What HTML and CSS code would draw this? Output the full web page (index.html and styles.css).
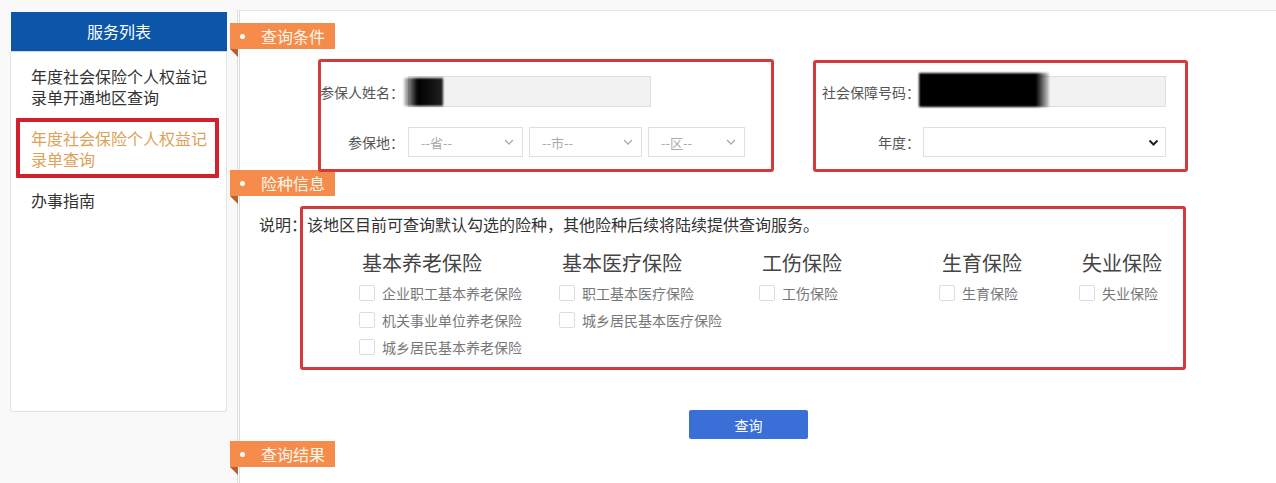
FILE: index.html
```html
<!DOCTYPE html>
<html>
<head>
    <title>年度社会保险个人权益记录单查询</title>
    <link rel="stylesheet" href="styles.css">
</head>
<body>
    <div class="page">
        <div class="sidebar">
            <div class="sidebar-head">服务列表</div>
            <ul class="menu">
                <li>年度社会保险个人权益记录单开通地区查询</li>
                <li class="active">年度社会保险个人权益记录单查询</li>
                <li>办事指南</li>
            </ul>
        </div>

        <div class="main">
            <div class="tag">查询条件</div>

            <div class="cond">
                <div class="cond-col">
                    <div class="field">
                        <label class="label">参保人姓名：</label>
                        <input class="input" type="text" readonly>
                    </div>
                    <div class="field">
                        <label class="label">参保地：</label>
                        <div class="select sel-prov">--省--<svg width="10" height="6" viewBox="0 0 10 6"><path d="M1 1l4 4 4-4" fill="none" stroke="#aaa" stroke-width="1.3"/></svg></div>
                        <div class="select sel-city">--市--<svg width="10" height="6" viewBox="0 0 10 6"><path d="M1 1l4 4 4-4" fill="none" stroke="#aaa" stroke-width="1.3"/></svg></div>
                        <div class="select sel-dist">--区--<svg width="10" height="6" viewBox="0 0 10 6"><path d="M1 1l4 4 4-4" fill="none" stroke="#aaa" stroke-width="1.3"/></svg></div>
                    </div>
                </div>
                <div class="cond-col">
                    <div class="field">
                        <label class="label label-wide">社会保障号码：</label>
                        <input class="input" type="text" readonly>
                    </div>
                    <div class="field">
                        <label class="label label-wide">年度：</label>
                        <div class="select sel-year"><svg width="11" height="7" viewBox="0 0 11 7"><path d="M1.5 1.5l4 4 4-4" fill="none" stroke="#222" stroke-width="2"/></svg></div>
                    </div>
                </div>
            </div>

            <div class="tag tag-mid">险种信息</div>

            <p class="note">说明：该地区目前可查询默认勾选的险种，其他险种后续将陆续提供查询服务。</p>

            <div class="groups">
                <div class="group">
                    <div class="group-title">基本养老保险</div>
                    <div class="check"><span class="box"></span>企业职工基本养老保险</div>
                    <div class="check"><span class="box"></span>机关事业单位养老保险</div>
                    <div class="check"><span class="box"></span>城乡居民基本养老保险</div>
                </div>
                <div class="group">
                    <div class="group-title">基本医疗保险</div>
                    <div class="check"><span class="box"></span>职工基本医疗保险</div>
                    <div class="check"><span class="box"></span>城乡居民基本医疗保险</div>
                </div>
                <div class="group">
                    <div class="group-title">工伤保险</div>
                    <div class="check"><span class="box"></span>工伤保险</div>
                </div>
                <div class="group">
                    <div class="group-title">生育保险</div>
                    <div class="check"><span class="box"></span>生育保险</div>
                </div>
                <div class="group">
                    <div class="group-title">失业保险</div>
                    <div class="check"><span class="box"></span>失业保险</div>
                </div>
            </div>

            <button class="button">查询</button>

            <div class="tag tag-last">查询结果</div>
        </div>

        <!-- redactions and annotation frames drawn over the screenshot -->
        <div class="blot blot-name"></div>
        <div class="blot blot-id"></div>
        <div class="mark mark-menu"></div>
        <div class="mark mark-left"></div>
        <div class="mark mark-right"></div>
        <div class="mark mark-groups"></div>
    </div>
</body>
</html>
```

FILE: styles.css
```css
body {
    margin: 0;
    background: #f9f9f9;
    font-family: "Microsoft YaHei", "Noto Sans CJK SC", sans-serif;
    color: #333;
}
.page {
    position: relative;
    display: flex;
    height: 483px;
    overflow: hidden;
}
.sidebar {
    width: 217px;
    margin: 12px 0 0 10px;
}
.sidebar-head {
    height: 39px;
    line-height: 39px;
    background: #0b56a8;
    color: #fff;
    font-size: 16px;
    text-align: center;
    margin-left: 1px;
    border-bottom: 1px solid #cfd6de;
}
.menu {
    list-style: none;
    margin: 0;
    padding: 14px 10px 0 20px;
    height: 345px;
    background: #fff;
    border: 1px solid #e2e2e2;
    border-top: none;
    border-radius: 0 0 3px 3px;
}
.menu li {
    font-size: 16px;
    line-height: 21px;
    color: #333;
    margin-bottom: 20px;
}
.menu li.active {
    color: #dca258;
}
.main {
    flex: 1;
    margin: 10px 0 0 10px;
    background: #fff;
    border-left: 3px double #dcdcdc;
    border-top: 1px solid #e6e6e6;
    padding-top: 12px;
}
.tag {
    position: relative;
    box-sizing: border-box;
    width: 105px;
    height: 26px;
    margin-left: -10px;
    padding-left: 10px;
    display: flex;
    align-items: center;
    background: #f68c4c;
    color: #fff6ea;
    font-size: 16px;
}
.tag::before {
    content: "";
    width: 5px;
    height: 5px;
    border-radius: 50%;
    background: #fff;
    margin-right: 16px;
}
.tag::after {
    content: "";
    position: absolute;
    left: 0;
    top: 100%;
    border-top: 8px solid #b8602b;
    border-left: 8px solid transparent;
}
.tag-mid {
    margin-top: 13px;
}
.tag-last {
    margin-top: 2px;
}
.cond {
    display: flex;
    gap: 75px;
    margin: 27px 0 0 74px;
}
.cond-col {
    display: flex;
    flex-direction: column;
    gap: 20px;
}
.field {
    display: flex;
    align-items: center;
    gap: 6px;
    height: 30px;
}
.field:first-child {
    height: 31px;
}
.label {
    width: 90px;
    margin-right: -2px;
    text-align: right;
    font-size: 14px;
    color: #555;
    flex-shrink: 0;
}
.label-wide {
    width: 100px;
    margin-right: -3px;
}
.input {
    box-sizing: border-box;
    width: 243px;
    height: 31px;
    border: 1px solid #dedede;
    background: #f2f2f2;
    margin: 0;
}
.select {
    box-sizing: border-box;
    height: 30px;
    border: 1px solid #e0e0e0;
    background: #fff;
    display: flex;
    align-items: center;
    justify-content: space-between;
    padding: 0 8px 0 12px;
    font-size: 13px;
    color: #aaa;
}
.sel-prov { width: 115px; }
.sel-city { width: 113px; }
.sel-dist { width: 97px; }
.sel-year {
    width: 243px;
    justify-content: flex-end;
    padding-right: 6px;
}
.note {
    margin: 18px 0 0 19px;
    font-size: 16px;
    line-height: 20px;
    color: #333;
}
.groups {
    display: grid;
    grid-template-columns: 200px 200px 180px 140px 1fr;
    margin: 17px 0 0 119px;
}
.group-title {
    font-size: 20px;
    line-height: 24px;
    color: #444;
    margin: 0 0 4px 3px;
}
.check {
    display: flex;
    align-items: center;
    height: 27px;
    font-size: 14px;
    color: #777;
}
.box {
    box-sizing: border-box;
    width: 16px;
    height: 16px;
    border: 1px solid #ddd;
    border-radius: 2px;
    background: #fff;
    margin-right: 7px;
}
.button {
    display: block;
    width: 119px;
    height: 29px;
    margin: 50px 0 0 449px;
    padding: 0;
    background: #3a6fd7;
    color: #fff;
    border: none;
    border-radius: 2px;
    font-family: inherit;
    font-size: 14px;
}
.blot {
    position: absolute;
    background: #000;
    filter: blur(1px);
}
.blot-name {
    left: 404px;
    top: 78px;
    width: 39px;
    height: 28px;
    background: linear-gradient(to right, rgba(0,0,0,0.2), #000 35%, #111 70%, #222);
}
.blot-id {
    left: 919px;
    top: 73px;
    width: 130px;
    height: 34px;
    background: linear-gradient(to right, #000 90%, rgba(0,0,0,0.15));
}
.mark {
    position: absolute;
    box-sizing: border-box;
    border: 3px solid #d33a3c;
    border-radius: 3px;
}
.mark-menu {
    left: 16px;
    top: 118px;
    width: 203px;
    height: 60px;
    border: 4px solid #d2202c;
    border-radius: 1px;
}
.mark-left {
    left: 318px;
    top: 59px;
    width: 456px;
    height: 113px;
}
.mark-right {
    left: 813px;
    top: 60px;
    width: 375px;
    height: 112px;
}
.mark-groups {
    left: 300px;
    top: 206px;
    width: 886px;
    height: 164px;
}
```
